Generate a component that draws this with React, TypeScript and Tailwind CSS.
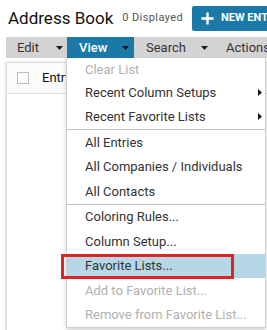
import React from "react";

const DownTri = ({ className = "" }: { className?: string }) => (
  <svg width="7" height="4" viewBox="0 0 7 4" className={`shrink-0 ${className}`}>
    <path d="M0 0 L7 0 L3.5 4 Z" fill="#1a1a1a" />
  </svg>
);

const RightTri = () => (
  <svg width="4" height="7" viewBox="0 0 4 7">
    <path d="M0 0 L4 3.5 L0 7 Z" fill="#1a1a1a" />
  </svg>
);

type Item = { label: string; disabled?: boolean; sub?: boolean; active?: boolean; first?: boolean };

const MenuItem = ({ label, disabled, sub, active, first }: Item) => (
  <div
    className={`flex items-center pl-[18px] pr-[3px] ${first ? "h-[22px]" : "h-[24.5px]"} ${
      active ? "bg-[#b6d7e5]" : ""
    } ${disabled ? "text-[#b0b0b0]" : "text-[#333333]"}`}
  >
    <span className="flex-1 whitespace-nowrap text-[13px] leading-[15px]">{label}</span>
    {sub && <RightTri />}
  </div>
);

const Sep = () => <div className="h-px bg-[#c4c4c4] -ml-px" />;

export default function App() {
  return (
    <div
      className="relative w-[267px] h-[330px] overflow-hidden bg-white"
      style={{ fontFamily: "Roboto, 'Liberation Sans', sans-serif" }}
    >
      {/* header */}
      <div className="flex items-center h-[37px] pl-[8px] whitespace-nowrap">
        <span className="shrink-0 text-[17px] text-[#111111]">Address Book</span>
        <span className="shrink-0 ml-[9px] text-[11px] tracking-[0.4px] text-[#555555]">0 Displayed</span>
        <div className="ml-[9px] flex items-center h-[25px] w-[110px] shrink-0 rounded-[2px] bg-[#1a79a6] pl-[9px]">
          <svg width="13" height="13" viewBox="0 0 13 13" className="shrink-0">
            <path d="M6.5 0.5 V12.5 M0.5 6.5 H12.5" stroke="white" strokeWidth="2.4" />
          </svg>
          <span className="ml-[7px] text-[11px] font-bold text-white">NEW ENTRY</span>
        </div>
      </div>

      {/* menu bar */}
      <div className="ml-[6px] flex h-[21px] bg-[#d3d3d3] text-[13px] whitespace-nowrap">
        <div className="flex w-[61px] shrink-0 items-center pl-[11px] text-[#333333]">
          <span>Edit</span>
          <DownTri className="ml-[17px]" />
        </div>
        <div className="flex w-[67px] shrink-0 items-center pl-[12px] bg-[#1a79a6] text-white font-medium">
          <span>View</span>
          <DownTri className="ml-[15px]" />
        </div>
        <div className="flex w-[80px] shrink-0 items-center pl-[12px] text-[#333333]">
          <span>Search</span>
          <DownTri className="ml-[15px]" />
        </div>
        <div className="flex shrink-0 items-center pl-[12px] text-[#333333]">
          <span>Actions</span>
          <DownTri className="ml-[15px]" />
        </div>
      </div>

      {/* table panel */}
      <div className="ml-[6px] mt-[4px] h-[300px] border-l border-t border-[#dcdcdc] shadow-[-1px_0_2px_rgba(0,0,0,0.12)]">
        <div className="flex h-[31px] items-center border-b border-[#dedede] bg-[#fbfbfb] pl-[10px]">
          <div className="h-[12px] w-[12px] shrink-0 border border-[#bdbdbd] bg-white" />
          <span className="ml-[13px] text-[13px] text-[#111111]">Entry</span>
        </div>
      </div>

      {/* dropdown menu */}
      <div className="absolute left-[66px] top-[58px] w-[200px] border border-t-0 border-[#d0d0d0] bg-white shadow-[0_2px_4px_rgba(0,0,0,0.18)]">
        <MenuItem label="Clear List" disabled first />
        <MenuItem label="Recent Column Setups" sub />
        <MenuItem label="Recent Favorite Lists" sub />
        <Sep />
        <MenuItem label="All Entries" />
        <MenuItem label="All Companies / Individuals" />
        <MenuItem label="All Contacts" />
        <Sep />
        <MenuItem label="Coloring Rules..." />
        <MenuItem label="Column Setup..." />
        <MenuItem label="Favorite Lists..." active />
        <MenuItem label="Add to Favorite List..." disabled />
        <MenuItem label="Remove from Favorite List..." disabled />
      </div>

      {/* red annotation box */}
      <div className="absolute left-[61px] top-[254px] h-[25px] w-[173px] border-[3px] border-[#e02229]" />
    </div>
  );
}
